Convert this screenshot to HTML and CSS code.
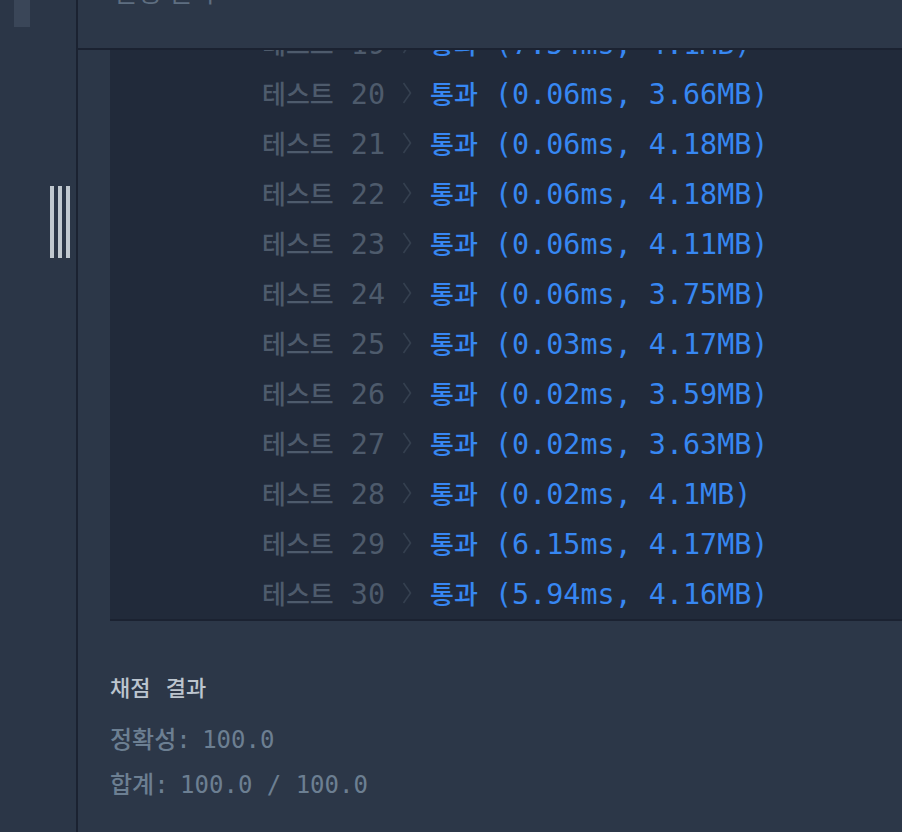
FILE: index.html
```html
<!DOCTYPE html>
<html lang="ko">
<head>
<meta charset="utf-8">
<link rel="stylesheet" href="styles.css">
</head>
<body>
<div class="app">
  <aside class="sidebar">
    <div class="thumb"></div>
    <div class="grip"><span></span><span></span><span></span></div>
  </aside>
  <main class="main">
    <header class="header"><h2 class="header-title">실행 결과</h2></header>
    <div class="scroll">
      <div class="console">
        <div class="row"><span class="label"><span class="ko">테스트</span> 19</span><svg class="chev" viewBox="0 0 10 22"><path d="M1.5 1 L8.5 11 L1.5 21" /></svg><span class="res"><span class="ko">통과</span> (7.54ms, 4.1MB)</span></div>
        <div class="row"><span class="label"><span class="ko">테스트</span> 20</span><svg class="chev" viewBox="0 0 10 22"><path d="M1.5 1 L8.5 11 L1.5 21" /></svg><span class="res"><span class="ko">통과</span> (0.06ms, 3.66MB)</span></div>
        <div class="row"><span class="label"><span class="ko">테스트</span> 21</span><svg class="chev" viewBox="0 0 10 22"><path d="M1.5 1 L8.5 11 L1.5 21" /></svg><span class="res"><span class="ko">통과</span> (0.06ms, 4.18MB)</span></div>
        <div class="row"><span class="label"><span class="ko">테스트</span> 22</span><svg class="chev" viewBox="0 0 10 22"><path d="M1.5 1 L8.5 11 L1.5 21" /></svg><span class="res"><span class="ko">통과</span> (0.06ms, 4.18MB)</span></div>
        <div class="row"><span class="label"><span class="ko">테스트</span> 23</span><svg class="chev" viewBox="0 0 10 22"><path d="M1.5 1 L8.5 11 L1.5 21" /></svg><span class="res"><span class="ko">통과</span> (0.06ms, 4.11MB)</span></div>
        <div class="row"><span class="label"><span class="ko">테스트</span> 24</span><svg class="chev" viewBox="0 0 10 22"><path d="M1.5 1 L8.5 11 L1.5 21" /></svg><span class="res"><span class="ko">통과</span> (0.06ms, 3.75MB)</span></div>
        <div class="row"><span class="label"><span class="ko">테스트</span> 25</span><svg class="chev" viewBox="0 0 10 22"><path d="M1.5 1 L8.5 11 L1.5 21" /></svg><span class="res"><span class="ko">통과</span> (0.03ms, 4.17MB)</span></div>
        <div class="row"><span class="label"><span class="ko">테스트</span> 26</span><svg class="chev" viewBox="0 0 10 22"><path d="M1.5 1 L8.5 11 L1.5 21" /></svg><span class="res"><span class="ko">통과</span> (0.02ms, 3.59MB)</span></div>
        <div class="row"><span class="label"><span class="ko">테스트</span> 27</span><svg class="chev" viewBox="0 0 10 22"><path d="M1.5 1 L8.5 11 L1.5 21" /></svg><span class="res"><span class="ko">통과</span> (0.02ms, 3.63MB)</span></div>
        <div class="row"><span class="label"><span class="ko">테스트</span> 28</span><svg class="chev" viewBox="0 0 10 22"><path d="M1.5 1 L8.5 11 L1.5 21" /></svg><span class="res"><span class="ko">통과</span> (0.02ms, 4.1MB)</span></div>
        <div class="row"><span class="label"><span class="ko">테스트</span> 29</span><svg class="chev" viewBox="0 0 10 22"><path d="M1.5 1 L8.5 11 L1.5 21" /></svg><span class="res"><span class="ko">통과</span> (6.15ms, 4.17MB)</span></div>
        <div class="row"><span class="label"><span class="ko">테스트</span> 30</span><svg class="chev" viewBox="0 0 10 22"><path d="M1.5 1 L8.5 11 L1.5 21" /></svg><span class="res"><span class="ko">통과</span> (5.94ms, 4.16MB)</span></div>
      </div>
    </div>
    <section class="summary">
      <h3 class="summary-title">채점 결과</h3>
      <p class="stat stat-acc"><span class="ko-stat">정확성</span><span class="sep">: </span>100.0</p>
      <p class="stat stat-sum"><span class="ko-stat">합계</span><span class="sep">: </span>100.0 / 100.0</p>
    </section>
  </main>
</div>
</body>
</html>
```

FILE: styles.css
```css
html, body {
  margin: 0;
  padding: 0;
  background: #2b3647;
  width: 902px;
  height: 832px;
  overflow: hidden;
}

.app {
  display: flex;
  height: 832px;
}

.sidebar {
  width: 76px;
  flex: none;
  border-right: 2px solid #1b2231;
  background: #2b3647;
  display: flex;
  flex-direction: column;
}

.thumb {
  margin-left: 14px;
  width: 16px;
  height: 27px;
  background: #3a4658;
}

.grip {
  margin-top: 159px;
  margin-left: 50px;
  display: flex;
  gap: 4px;
  height: 72px;
}

.grip span {
  width: 4px;
  background: #c0c8cf;
}

.main {
  flex: 1;
  min-width: 0;
  display: flex;
  flex-direction: column;
  background: #2c3748;
}

.header {
  height: 48px;
  flex: none;
  border-bottom: 2px solid #1b2231;
  overflow: hidden;
  padding-left: 35px;
}

.header-title {
  margin: -26px 0 0 0;
  font-family: "Noto Sans CJK KR", sans-serif;
  font-weight: 400;
  font-size: 26px;
  line-height: 34px;
  color: #5e6e80;
}

.scroll {
  height: 571px;
  flex: none;
  overflow: hidden;
  display: flex;
  flex-direction: column;
  justify-content: flex-end;
  padding-left: 32px;
}

.console {
  flex: none;
  background: #212a3a;
  border-bottom: 2px solid #1b2231;
  padding-left: 152px;
  font-family: "DejaVu Sans Mono", monospace;
  font-size: 28.4px;
}

.row {
  height: 50px;
  box-sizing: border-box;
  padding-bottom: 3px;
  display: flex;
  align-items: center;
  white-space: pre;
}

.ko {
  font-family: "Noto Sans CJK KR", sans-serif;
  font-size: 26px;
  font-weight: 500;
}

.label {
  color: #4e5b6c;
}

.chev {
  width: 10px;
  height: 22px;
  margin-left: 17px;
  margin-right: 18px;
  fill: none;
  stroke: #354050;
  stroke-width: 1.6;
}

.res {
  color: #3787f2;
}

.summary {
  padding-left: 32px;
  padding-top: 50px;
}

.summary-title {
  margin: 0;
  font-family: "Noto Sans CJK KR", sans-serif;
  font-weight: 500;
  font-size: 22px;
  line-height: 30px;
  color: #bcc5cf;
  word-spacing: 9px;
}

.stat {
  margin: 0;
  font-family: "DejaVu Sans Mono", monospace;
  font-size: 24px;
  line-height: 30px;
  color: #6c7f92;
  white-space: pre;
}

.ko-stat {
  font-family: "Noto Sans CJK KR", sans-serif;
  font-size: 24px;
  font-weight: 500;
}

.sep {
  letter-spacing: -1.5px;
}

.stat-acc {
  margin-top: 22px;
}

.stat-sum {
  margin-top: 13px;
}
```
